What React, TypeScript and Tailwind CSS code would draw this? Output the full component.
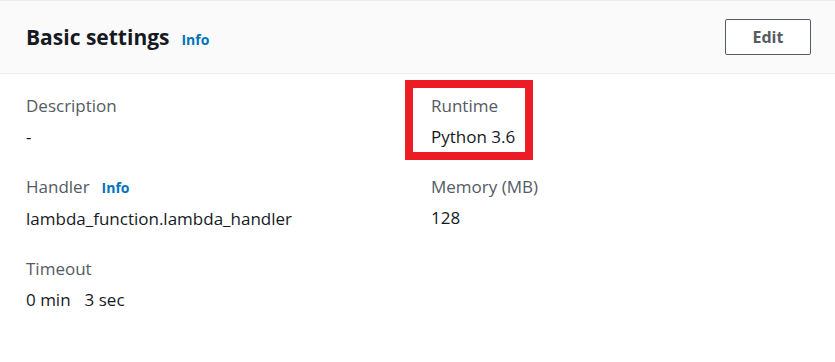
import React from "react";

const font = { fontFamily: '"Open Sans", "Noto Sans", Arial, sans-serif' };

function Field({
  label,
  value,
  info,
  highlight,
}: {
  label: string;
  value: React.ReactNode;
  info?: boolean;
  highlight?: boolean;
}) {
  return (
    <div className="relative flex flex-col gap-[9px]">
      {highlight && (
        <div className="absolute left-[-26px] top-[-15px] w-[128px] h-[80px] border-[8px] border-[#ec1c24] pointer-events-none" />
      )}
      <div className="flex items-baseline gap-[12px] text-[17px] leading-[22px] text-[#545b64]">
        <span>{label}</span>
        {info && <span className="text-[14px] font-bold text-[#0073bb]">Info</span>}
      </div>
      <div className="text-[17px] leading-[22px] text-[#16191f]">{value}</div>
    </div>
  );
}

export default function App() {
  return (
    <div className="w-[835px] h-[362px] bg-white overflow-hidden" style={font}>
      <div className="h-[74px] bg-[#fafafa] border-t border-b border-[#eaeded] flex items-center justify-between pl-[26px] pr-[24px]">
        <div className="flex items-baseline gap-[12px]">
          <h2 className="text-[21px] font-bold text-[#16191f] leading-[28px]">Basic settings</h2>
          <span className="text-[14px] font-bold text-[#0073bb]">Info</span>
        </div>
        <button className="w-[86px] h-[36px] border border-[#545b64] rounded-[2px] bg-white text-[16px] font-bold text-[#545b64]">
          Edit
        </button>
      </div>
      <div className="grid grid-cols-2 gap-x-[27px] gap-y-[28px] px-[26px] pt-[21px]">
        <Field label="Description" value="-" />
        <Field label="Runtime" value="Python 3.6" highlight />
        <Field label="Handler" value="lambda_function.lambda_handler" info />
        <Field label="Memory (MB)" value="128" />
        <Field
          label="Timeout"
          value={
            <span>
              0 min<span className="inline-block w-[14px]" />3 sec
            </span>
          }
        />
      </div>
    </div>
  );
}
